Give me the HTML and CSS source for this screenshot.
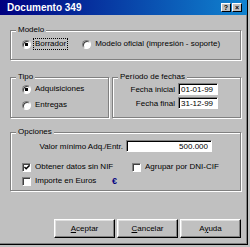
FILE: index.html
```html
<!DOCTYPE html>
<html lang="es">
<head>
    <meta charset="UTF-8">
    <title>Documento 349</title>
    <link rel="stylesheet" href="styles.css">
</head>
<body>
    <div class="window">
        <div class="titlebar">
            <span class="title">Documento 349</span>
            <div class="tbtns">
                <span class="tbtn">?</span>
                <span class="tbtn">&times;</span>
            </div>
        </div>

        <div class="content">
            <!-- Modelo -->
            <div class="group modelo">
                <span class="legend">Modelo</span>
                <div class="options">
                    <div class="choice">
                        <span class="radio checked"></span>
                        <span class="label focus">Borrador</span>
                    </div>
                    <div class="choice">
                        <span class="radio"></span>
                        <span class="label">Modelo oficial (impresión - soporte)</span>
                    </div>
                </div>
            </div>

            <div class="row2">
                <!-- Tipo -->
                <div class="group tipo">
                    <span class="legend">Tipo</span>
                    <div class="stack">
                        <div class="choice">
                            <span class="radio checked"></span>
                            <span class="label">Adquisiciones</span>
                        </div>
                        <div class="choice">
                            <span class="radio"></span>
                            <span class="label">Entregas</span>
                        </div>
                    </div>
                </div>

                <!-- Periodo -->
                <div class="group periodo">
                    <span class="legend">Período de fechas</span>
                    <div class="fechas">
                        <div class="field">
                            <label for="fini">Fecha inicial</label>
                            <input class="edit fecha" id="fini" type="text" value="01-01-99">
                        </div>
                        <div class="field">
                            <label for="ffin">Fecha final</label>
                            <input class="edit fecha" id="ffin" type="text" value="31-12-99">
                        </div>
                    </div>
                </div>
            </div>

            <!-- Opciones -->
            <div class="group opciones">
                <span class="legend">Opciones</span>
                <div class="field valor">
                    <label for="valor">Valor mínimo Adq./Entr.</label>
                    <input class="edit importe" id="valor" type="text" value="500.000">
                </div>
                <div class="checks">
                    <div class="choice">
                        <span class="check checked">
                            <svg width="7" height="7" viewBox="0 0 7 7"><polyline points="0.5,3 2.5,5 6.5,1" fill="none" stroke="#000" stroke-width="1.6"/></svg>
                        </span>
                        <span class="label">Obtener datos sin NIF</span>
                    </div>
                    <div class="choice">
                        <span class="check"></span>
                        <span class="label">Agrupar por DNI-CIF</span>
                    </div>
                    <div class="choice">
                        <span class="check"></span>
                        <span class="label">Importe en Euros</span>
                        <span class="euro">€</span>
                    </div>
                </div>
            </div>

            <div class="buttons">
                <button class="btn"><u>A</u>ceptar</button>
                <button class="btn"><u>C</u>ancelar</button>
                <button class="btn">A<u>y</u>uda</button>
            </div>
        </div>
    </div>
</body>
</html>
```

FILE: styles.css
```css
html, body {
    margin: 0;
    padding: 0;
}
body {
    background-color: #c0c0c0;
    font-family: "Liberation Sans", Arial, sans-serif;
    font-size: 8px;
    color: #000;
}
.window {
    box-sizing: border-box;
    width: 248px;
    height: 245px;
    background: #c0c0c0;
    border-right: 1px solid #000;
    border-bottom: 1px solid #000;
    box-shadow: inset -1px -1px 0 #808080;
}
.titlebar {
    height: 15px;
    display: flex;
    align-items: center;
    padding: 0 5px 0 7px;
    background: linear-gradient(to right, #000080, #1084d0);
    color: #fff;
}
.title {
    flex: 1;
    font-size: 10px;
    font-weight: bold;
    line-height: 15px;
}
.tbtns {
    display: flex;
    gap: 1px;
}
.tbtn {
    box-sizing: border-box;
    width: 10px;
    height: 9px;
    background: #c0c0c0;
    border: 1px solid;
    border-color: #fff #000 #000 #fff;
    color: #000;
    font-size: 7px;
    font-weight: bold;
    line-height: 7px;
    text-align: center;
}
.content {
    padding: 15px 6px 0 10px;
}
.group {
    box-sizing: border-box;
    border: 1px solid #808080;
    box-shadow: inset 1px 1px 0 #fff, 1px 1px 0 #fff;
    padding-left: 11px;
}
.legend {
    display: table;
    margin: -6px 0 0 -6px;
    padding: 0 2px;
    background: #c0c0c0;
    line-height: 10px;
}
.choice {
    display: flex;
    align-items: center;
    height: 12px;
}
.label {
    margin-left: 2px;
    padding: 0 2px;
    line-height: 10px;
    white-space: nowrap;
}
.focus {
    padding: 0 1px;
    border: 1px dotted #000;
}
.radio {
    box-sizing: border-box;
    width: 9px;
    height: 9px;
    border-radius: 50%;
    background: #fff;
    border: 1px solid;
    border-color: #808080 #fff #fff #808080;
    box-shadow: inset 1px 1px 0 #404040;
}
.radio.checked {
    background: radial-gradient(circle, #000 1.4px, #fff 2px);
}
.check {
    box-sizing: border-box;
    width: 9px;
    height: 9px;
    display: flex;
    align-items: center;
    justify-content: center;
    background: #fff;
    border: 1px solid;
    border-color: #808080 #fff #fff #808080;
    box-shadow: inset 1px 1px 0 #404040;
}
.check svg {
    display: block;
    margin: 1px 0 0 1px;
}

/* Modelo */
.modelo {
    height: 30px;
}
.options {
    display: flex;
    margin-top: 3px;
}
.options .choice + .choice {
    margin-left: 14px;
}

/* Tipo / Periodo */
.row2 {
    display: flex;
    gap: 3px;
    margin-top: 17px;
}
.tipo {
    width: 99px;
    height: 41px;
}
.stack {
    display: flex;
    flex-direction: column;
    gap: 4px;
    margin-top: 1px;
}
.periodo {
    width: 129px;
    height: 41px;
    padding-right: 22px;
}
.fechas {
    display: flex;
    flex-direction: column;
    gap: 2px;
    margin-top: 1px;
}
.field {
    display: flex;
    align-items: center;
    justify-content: flex-end;
}
.field label {
    margin-right: 3px;
    white-space: nowrap;
}
.edit {
    box-sizing: border-box;
    height: 12px;
    margin: 0;
    padding: 0 2px;
    background: #fff;
    border: 1px solid;
    border-color: #808080 #fff #fff #808080;
    box-shadow: inset 1px 1px 0 #000;
    font-family: inherit;
    font-size: 8px;
    color: #000;
    outline: none;
}
.fecha {
    width: 40px;
}
.importe {
    width: 86px;
    text-align: right;
    padding-right: 3px;
}

/* Opciones */
.opciones {
    height: 59px;
    margin-top: 14px;
    padding-right: 28px;
}
.valor {
    margin-top: 3px;
}
.checks {
    display: grid;
    grid-template-columns: 110px auto;
    row-gap: 2px;
    margin-top: 9px;
}
.euro {
    margin-left: auto;
    margin-right: 15px;
    color: #000080;
    font-weight: bold;
    font-size: 9px;
}

/* Botones */
.buttons {
    display: flex;
    justify-content: flex-end;
    gap: 2px;
    margin-top: 28px;
}
.btn {
    box-sizing: border-box;
    width: 61px;
    height: 19px;
    padding: 0;
    background: #c0c0c0;
    border: 1px solid;
    border-color: #fff #000 #000 #fff;
    box-shadow: inset -1px -1px 0 #808080, inset 1px 1px 0 #dfdfdf;
    font-family: inherit;
    font-size: 8px;
    color: #000;
}
```
